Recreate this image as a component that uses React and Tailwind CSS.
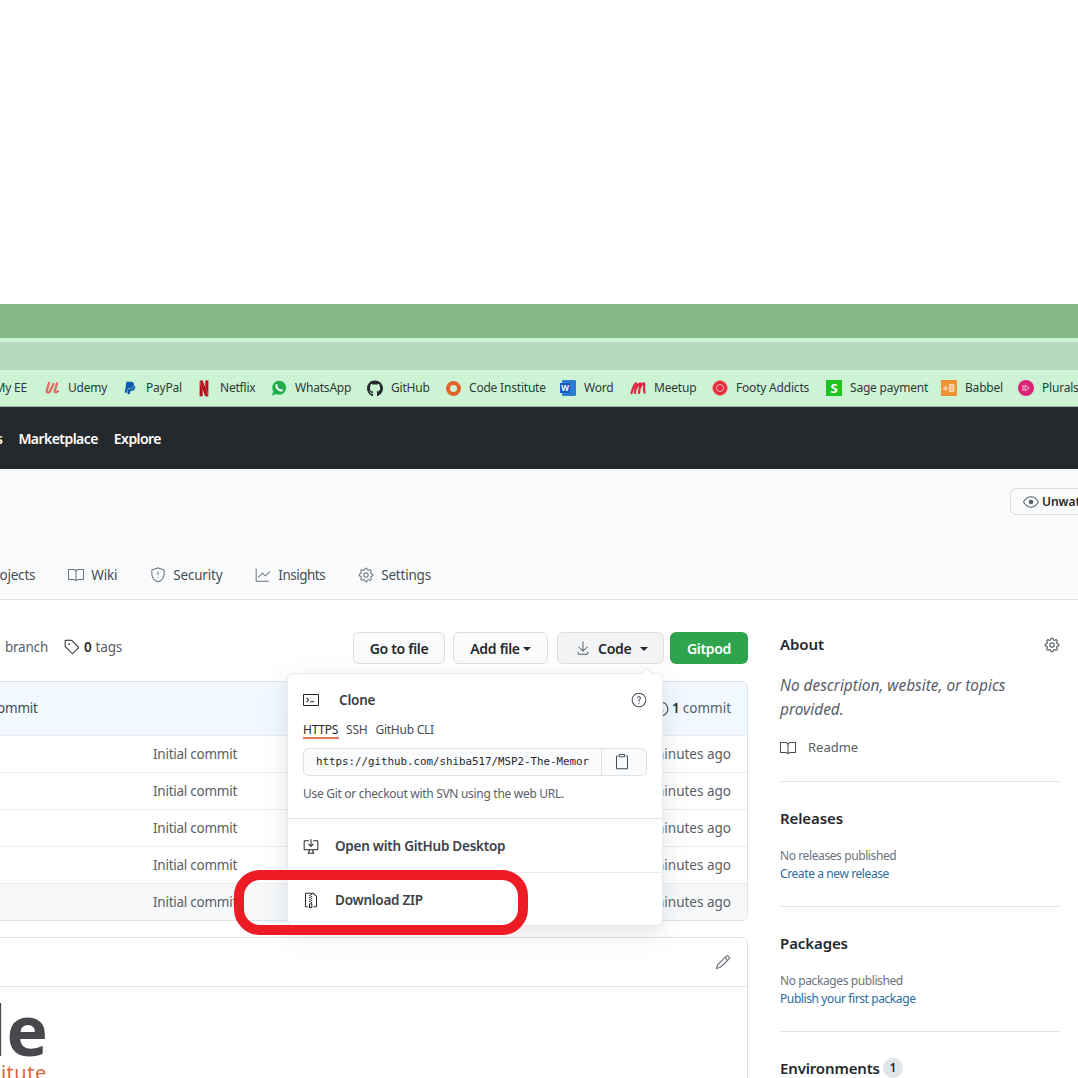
import React from "react";
import { GoBook, GoShield, GoGraph, GoGear, GoEye, GoTag, GoTerminal, GoDownload, GoQuestion, GoPaste, GoPencil, GoFileZip, GoDesktopDownload, GoHistory } from "react-icons/go";
import { FaPaypal, FaGithub } from "react-icons/fa";
import { SiNetflix } from "react-icons/si";

const Udemy = () => (
  <svg width="16" height="16" viewBox="0 0 16 16" fill="none" stroke="#dd6f68" strokeWidth="2.4" strokeLinecap="round">
    <path d="M5 3 2.8 10.5c-.5 2 2 2.6 3.2 1L9.4 4" />
    <path d="M13 3.5 10.8 10.6c-.5 1.8 1.4 2.2 3.2.6" />
  </svg>
);
const WhatsApp = () => (
  <svg width="16" height="16" viewBox="0 0 16 16">
    <circle cx="8.2" cy="7.8" r="7" fill="#20ae4d" />
    <path d="M1 15.5l1.3-4.6 3.2 3.2z" fill="#20ae4d" />
    <path d="M5.6 5c-.7 1.100.2 3 1.600 4.200S10 11 11 10.200" fill="none" stroke="#fff" strokeWidth="1.900" strokeLinecap="round" />
  </svg>
);
const Meetup = () => (
  <svg width="16" height="16" viewBox="0 0 16 16" fill="none" stroke="#dc2a44" strokeWidth="2.3" strokeLinecap="round">
    <path d="M1.500 13C3 8 5 3.500 6 3.500c1 0-1 6-1 9.500M6 8.500C8 4.500 10 3 10.500 3.500c.6.700-1.500 6-1.500 9.500M10.500 7c1-3 3-4 3.700-3.500.6.500-1 5 .3 9" />
  </svg>
);
const Word = () => (
  <span className="relative w-4 h-4 flex">
    <span className="absolute left-[2px] top-0 w-[14px] h-4 bg-[#2b7cd3] rounded-[1px]" />
    <span className="absolute left-0 top-[3px] w-[10px] h-[10px] bg-[#185abd] text-white text-[8px] leading-[10px] font-bold text-center">W</span>
  </span>
);
const Ring = () => <span className="w-[15px] h-[15px] rounded-full border-[4px] border-[#e2622f] block" />;
const Footy = () => (
  <span className="w-4 h-4 rounded-full bg-[#e02b3c] border-[1.5px] border-[#f0a0a0] flex items-center justify-center">
    <span className="w-[8px] h-[8px] rounded-full border border-[#f6b6b6]" />
  </span>
);
const Sage = () => <span className="w-4 h-4 bg-[#1fc41f] text-white text-[13px] leading-4 font-bold text-center block">S</span>;
const Babbel = () => <span className="w-4 h-4 bg-[#ef9433] text-[#fbe3c6] text-[10px] leading-4 font-bold text-center block">+B</span>;
const Plural = () => (
  <span className="w-4 h-4 rounded-full bg-[#dd2277] flex items-center justify-center">
    <svg width="8" height="8" viewBox="0 0 8 8" fill="none" stroke="#f9c6dc" strokeWidth="1"><path d="M1 1v6M3 1l4 3-4 3z" /></svg>
  </span>
);

const bookmarks = [
  { label: "My EE", w: "w-[37px] pr-[1px] text-right", icon: null },
  { label: "Udemy", w: "w-[38px]", icon: <Udemy /> },
  { label: "PayPal", w: "w-[34px]", icon: <FaPaypal size={14} color="#0b5cad" /> },
  { label: "Netflix", w: "w-[35px]", icon: <SiNetflix size={17} color="#b5101c" /> },
  { label: "WhatsApp", w: "w-[56px]", icon: <WhatsApp /> },
  { label: "GitHub", w: "w-[38px]", icon: <FaGithub size={17} color="#24292e" /> },
  { label: "Code Institute", w: "w-[75px]", icon: <Ring /> },
  { label: "Word", w: "w-[30px]", icon: <Word /> },
  { label: "Meetup", w: "w-[42px]", icon: <Meetup /> },
  { label: "Footy Addicts", w: "w-[74px]", icon: <Footy /> },
  { label: "Sage payment", w: "w-[75px]", icon: <Sage /> },
  { label: "Babbel", w: "w-[37px]", icon: <Babbel /> },
  { label: "Pluralsight", w: "w-[60px]", icon: <Plural /> },
];

const tabs = [
  { label: "Projects", icon: null, t: "" },
  { label: "Wiki", icon: <GoBook size={16} />, t: "" },
  { label: "Security", icon: <GoShield size={16} />, t: "" },
  { label: "Insights", icon: <GoGraph size={16} />, t: "tracking-[-0.5px]" },
  { label: "Settings", icon: <GoGear size={16} />, t: "" },
];

const Row = ({ shade }) => (
  <div className={`h-[37px] flex items-center justify-between pl-[160px] pr-4 border-t border-[#eaecef] text-[13.5px] text-[#586069] ${shade ? "bg-[#f6f8fa]" : ""}`}>
    <span className="tracking-[-0.25px]">Initial commit</span>
    <span>9 minutes ago</span>
  </div>
);

export default function App() {
  return (
    <div className="relative w-[1078px] h-[1078px] overflow-hidden bg-white text-[#24292e] font-['Noto_Sans','Liberation_Sans',sans-serif]">
      <div className="h-[304px] bg-white" />
      <div className="h-[34px] bg-[#87b987]" />
      <div className="h-[4px] bg-[#ccf3d3]" />
      <div className="h-[28px] bg-[#b5d9bc]" />

      <div className="h-[37px] bg-[#ccf4d4] border-b border-[#9fb5a5] flex items-center gap-[16px] -ml-[9px] text-[12px] text-[#30383a] whitespace-nowrap">
        {bookmarks.map((b) => (
          <div key={b.label} className="flex items-center shrink-0">
            {b.icon && <span className="w-[16px] h-[16px] flex items-center justify-center mr-[8px] shrink-0">{b.icon}</span>}
            <span className={`${b.w} tracking-[-0.2px]`}>{b.label}</span>
          </div>
        ))}
      </div>

      <div className="h-[62px] bg-[#24292e]">
        <div className="h-full flex items-center justify-end w-[161px] text-white text-[14px] font-semibold whitespace-nowrap gap-4 tracking-[-0.55px]">
          <span className="shrink-0">Issues</span>
          <span className="shrink-0">Marketplace</span>
          <span className="shrink-0">Explore</span>
        </div>
      </div>

      <div className="h-[131px] bg-[#fafbfc] border-b border-[#e1e4e8] flex flex-col">
        <div className="h-[46px] flex justify-end items-end">
          <div className="h-[27px] w-[90px] -mr-[22px] border border-[#d8dcdf] rounded-l-md bg-[#fafbfc] flex items-center gap-[3px] pl-[12px] text-[12px] font-semibold text-[#24292e]">
            <GoEye size={16} className="text-[#586069] shrink-0" />
            <span>Unwatch</span>
          </div>
        </div>
        <div className="flex-1 flex items-end pb-[14px]">
          <div className="w-[431px] flex justify-end items-center gap-[33px] text-[13.5px] text-[#444d56] whitespace-nowrap tracking-[-0.2px]">
            {tabs.map((t) => (
              <div key={t.label} className="flex items-center gap-[7px] shrink-0">
                {t.icon && <span className="text-[#6a737d] flex">{t.icon}</span>}
                <span className={t.t}>{t.label}</span>
              </div>
            ))}
          </div>
        </div>
      </div>

      <div className="flex pt-[32px]">
        <div className="w-[748px] shrink-0">
          <div className="h-[32px] flex items-center justify-between text-[13.5px]">
            <div className="w-[122px] flex justify-end items-center gap-[16px] whitespace-nowrap text-[#586069] tracking-[-0.2px] pb-[2px]">
              <span className="shrink-0"><b className="font-semibold text-[#24292e]">1</b> branch</span>
              <span className="flex items-center gap-1 shrink-0"><GoTag size={16} className="text-[#24292e]" /><b className="font-semibold text-[#24292e]">0</b> tags</span>
            </div>
            <div className="flex items-center font-semibold text-[14px] tracking-[-0.3px]">
              <div className="w-[92px] h-[32px] flex items-center justify-center rounded-md border border-[#dcdfe2] bg-[#fafbfc] mr-[8px]">Go to file</div>
              <div className="w-[95px] h-[32px] flex items-center justify-center gap-[3px] rounded-md border border-[#dcdfe2] bg-[#fafbfc] mr-[9px]">
                <span>Add file</span><span className="border-x-[4px] border-x-transparent border-t-[4px] border-t-[#24292e] mt-[1px]" />
              </div>
              <div className="w-[107px] h-[32px] flex items-center rounded-md border border-[#dcdfe2] bg-[#f3f4f6] mr-[6px] pl-[17px]">
                <GoDownload size={16} className="text-[#586069] mr-[7px]" />
                <span>Code</span>
                <span className="border-x-[4px] border-x-transparent border-t-[4px] border-t-[#24292e] ml-[9px] mt-[1px]" />
              </div>
              <div className="w-[78px] h-[32px] flex items-center justify-center rounded-md bg-[#2ea44f] text-white">Gitpod</div>
            </div>
          </div>

          <div className="mt-[17px] -ml-[8px] rounded-md border border-[#dfe2e5] overflow-hidden">
            <div className="h-[53px] bg-[#f1f8ff] flex items-center justify-between pl-[4px] pr-4 text-[13.5px] text-[#586069]">
              <span className="text-[#444d56] tracking-[-0.2px]">ommit</span>
              <span className="flex items-center gap-[3px]"><GoHistory size={16} className="text-[#24292e]" /><b className="font-semibold text-[#24292e]">1</b> commit</span>
            </div>
            <Row /><Row /><Row /><Row /><Row shade />
          </div>

          <div className="mt-[16px] -ml-[8px] rounded-t-md border border-[#dfe2e5] h-[200px]">
            <div className="h-[49px] border-b border-[#e1e4e8] flex items-center justify-end pr-[16px] text-[#586069]">
              <GoPencil size={16} />
            </div>
            <div className="pt-[6px] overflow-hidden">
              <div className="-ml-[31px] text-[70px] leading-[72px] font-bold text-[#47484c]">de</div>
              <div className="text-[20px] leading-[18px] text-[#d9663a] -ml-[30px] mt-[-1px] tracking-[0.5px]">Institute</div>
            </div>
          </div>
        </div>

        <div className="ml-[32px] w-[280px] shrink-0">
          <div className="h-[150px] border-b border-[#e1e4e8]">
            <div className="h-[25px] flex items-center justify-between text-[15px] font-semibold tracking-[-0.1px]">
              <span>About</span>
              <GoGear size={16} className="text-[#444d56]" />
            </div>
            <p className="mt-[17px] text-[15.4px] leading-[24px] italic text-[#586069]">No description, website, or topics<br />provided.</p>
            <div className="mt-[16px] h-[20px] flex items-center gap-[12px] text-[13px] text-[#586069]">
              <GoBook size={16} className="text-[#444d56]" /><span>Readme</span>
            </div>
          </div>
          <div className="h-[125px] pt-[24px] border-b border-[#e1e4e8]">
            <div className="h-[24px] leading-[24px] text-[15px] font-semibold tracking-[-0.1px]">Releases</div>
            <div className="mt-[17px] text-[12px] leading-[18px] text-[#6a737d] tracking-[-0.4px]">No releases published</div>
            <div className="text-[12px] leading-[18px] text-[#2c6c9e] tracking-[-0.4px]">Create a new release</div>
          </div>
          <div className="h-[125px] pt-[24px] border-b border-[#e1e4e8]">
            <div className="h-[24px] leading-[24px] text-[15px] font-semibold tracking-[-0.1px]">Packages</div>
            <div className="mt-[17px] text-[12px] leading-[18px] text-[#6a737d] tracking-[-0.4px]">No packages published</div>
            <div className="text-[12px] leading-[18px] text-[#2c6c9e] tracking-[-0.4px]">Publish your first package</div>
          </div>
          <div className="pt-[24px] flex items-start gap-[3px] h-[60px]">
            <span className="text-[15px] leading-[24px] font-semibold tracking-[-0.15px]">Environments</span>
            <span className="w-[20px] h-[20px] mt-[2px] rounded-full bg-[#e1e4e8] text-[12px] font-semibold flex items-center justify-center">1</span>
          </div>
        </div>
      </div>

      {/* Clone dropdown */}
      <div className="absolute left-[287px] top-[673px] w-[376px] h-[253px] bg-white rounded-md border border-[#e8eaed] shadow-[0_8px_24px_rgba(149,157,165,0.25)] flex flex-col">
        <span className="absolute right-[11px] -top-[5px] w-[9px] h-[9px] bg-white rotate-45 border-l border-t border-[#e1e4e8]" />
        <div className="h-[145px] border-b border-[#e1e4e8] px-[15px]">
          <div className="h-[52px] -mb-[2px] flex items-center text-[13.5px] font-semibold text-[#373e44]">
            <GoTerminal size={16} className="text-[#24292e]" />
            <span className="ml-[20px] tracking-[-0.2px]">Clone</span>
            <GoQuestion size={16} className="ml-auto text-[#444d56]" />
          </div>
          <div className="h-[12px] flex items-center gap-[8px] text-[12px] text-[#444d56] tracking-[-0.25px] whitespace-nowrap">
            <span className="text-[#24292e]">HTTPS</span><span>SSH</span><span>GitHub CLI</span>
          </div>
          <div className="w-[36px] h-[2px] bg-[#e0785a] mt-[1px]" />
          <div className="mt-[9px] h-[28px] flex rounded-md border border-[#dfe2e5] bg-[#fafbfc]">
            <div className="w-[297px] pl-[12px] font-['DejaVu_Sans_Mono','Liberation_Mono',monospace] text-[10.8px] leading-[26px] whitespace-nowrap text-[#24292e]">
              <div className="w-[273px] overflow-hidden">https://github.com/shiba517/MSP2-The-Memory-Game.git</div>
            </div>
            <div className="flex-1 border-l border-[#dfe2e5] flex items-center justify-center pr-[4px] text-[#444d56]"><GoPaste size={16} /></div>
          </div>
          <div className="mt-[10px] text-[12px] text-[#586069] tracking-[-0.3px] leading-[16px] whitespace-nowrap">Use Git or checkout with SVN using the web URL.</div>
        </div>
        <div className="h-[54px] border-b border-[#e8eaed] flex items-center px-[15px] pt-[2px] text-[13.5px] font-semibold text-[#3b4249] tracking-[-0.25px]">
          <GoDesktopDownload size={16} className="text-[#24292e]" />
          <span className="ml-[16px]">Open with GitHub Desktop</span>
        </div>
        <div className="flex-1 flex items-center px-[15px] pt-[2px] text-[13.5px] font-semibold text-[#3b4249] tracking-[-0.25px]">
          <GoFileZip size={16} className="text-[#24292e]" />
          <span className="ml-[16px]">Download ZIP</span>
        </div>
      </div>

      {/* Red hand-drawn highlight */}
      <div className="absolute left-[234px] top-[870px] w-[294px] h-[65px] rounded-[26px] border-[10px] border-[#ed1c24]" />
    </div>
  );
}
